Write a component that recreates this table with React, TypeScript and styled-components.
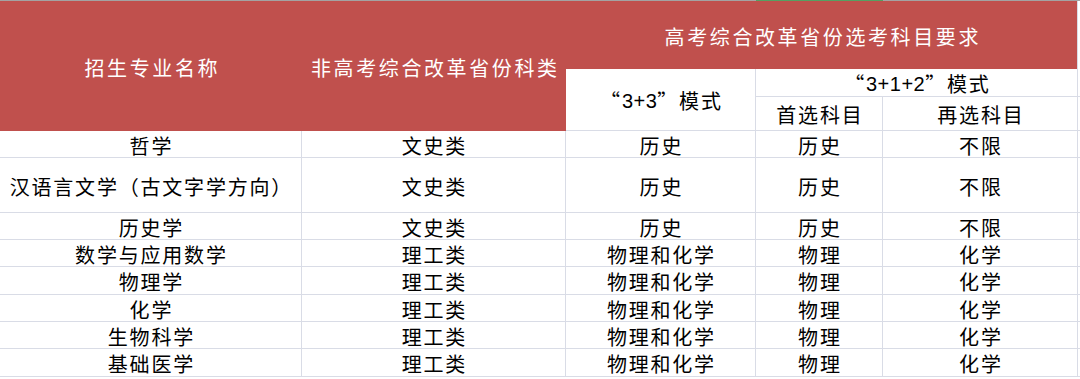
import React from "react";
import styled, { createGlobalStyle } from "styled-components";

const GlobalStyle = createGlobalStyle`
  html, body { margin: 0; padding: 0; background: #ffffff; }
  body { font-family: "Noto Sans CJK SC", "Noto Sans", sans-serif; }
`;

const LINE = "#d9dce6";
const RED = "#c0504d";

const Sheet = styled.div`
  display: grid;
  grid-template-columns: 302px 264px 190px 127px 195px 2px;
  grid-template-rows: 1px 68px 28px 34px 27px 55px 27px 27px 28px 27px 27px 28px 2px;
  width: 1080px;
  height: 379px;
  overflow: hidden;
  background: #ffffff;
`;

const Strip = styled.div<{ $col: string; $active?: boolean }>`
  grid-row: 1 / 2;
  grid-column: ${(p) => p.$col};
  background: ${(p) => (p.$active ? "#55a062" : "#a3a3a3")};
`;

const Cell = styled.div<{
  $row: string;
  $col: string;
  $red?: boolean;
  $edge?: boolean;
  $spacing?: number;
}>`
  grid-row: ${(p) => p.$row};
  grid-column: ${(p) => p.$col};
  box-sizing: border-box;
  display: flex;
  align-items: center;
  justify-content: center;
  white-space: nowrap;
  overflow: visible;
  font-family: "Noto Sans CJK SC", sans-serif;
  font-size: 20px;
  line-height: 1;
  letter-spacing: ${(p) => p.$spacing ?? 1.8}px;
  padding-left: ${(p) => p.$spacing ?? 1.8}px;
  padding-top: 3px;
  color: ${(p) => (p.$red ? "#ffffff" : "#000000")};
  background: ${(p) => (p.$red ? RED : "#ffffff")};
  border-right: ${(p) => (p.$red && !p.$edge ? "none" : `1px solid ${LINE}`)};
  border-bottom: ${(p) => (p.$red ? "none" : `1px solid ${LINE}`)};
`;

const Spacer = styled.div<{ $row: string; $lined?: boolean }>`
  grid-row: ${(p) => p.$row};
  grid-column: 6 / 7;
  box-sizing: border-box;
  background: #ffffff;
  border-bottom: ${(p) => (p.$lined ? `1px solid ${LINE}` : "none")};
`;

const Latin = styled.span`
  font-family: "Liberation Sans", Arial, sans-serif;
  letter-spacing: 0.5px;
`;

type Row = [string, string, string, string, string];

const rows: Row[] = [
  ["哲学", "文史类", "历史", "历史", "不限"],
  ["汉语言文学（古文字学方向）", "文史类", "历史", "历史", "不限"],
  ["历史学", "文史类", "历史", "历史", "不限"],
  ["数学与应用数学", "理工类", "物理和化学", "物理", "化学"],
  ["物理学", "理工类", "物理和化学", "物理", "化学"],
  ["化学", "理工类", "物理和化学", "物理", "化学"],
  ["生物科学", "理工类", "物理和化学", "物理", "化学"],
  ["基础医学", "理工类", "物理和化学", "物理", "化学"],
];

export default function App() {
  return (
    <>
      <GlobalStyle />
      <Sheet>
        <Strip $col="1 / 4" />
        <Strip $col="4 / 5" $active />
        <Strip $col="5 / 7" />

        <Cell $row="2 / 5" $col="1 / 2" $red $spacing={2.6}>
          招生专业名称
        </Cell>
        <Cell $row="2 / 5" $col="2 / 3" $red $spacing={2.6}>
          非高考综合改革省份科类
        </Cell>
        <Cell $row="2 / 3" $col="3 / 6" $red $edge $spacing={2.6}>
          高考综合改革省份选考科目要求
        </Cell>
        <Cell $row="3 / 5" $col="3 / 4">
          “<Latin>3+3</Latin>”模式
        </Cell>
        <Cell $row="3 / 4" $col="4 / 6">
          “<Latin>3+1+2</Latin>”模式
        </Cell>
        <Cell $row="4 / 5" $col="4 / 5">
          首选科目
        </Cell>
        <Cell $row="4 / 5" $col="5 / 6">
          再选科目
        </Cell>
        <Spacer $row="2 / 3" />
        <Spacer $row="3 / 4" $lined />
        <Spacer $row="4 / 5" $lined />

        {rows.map((r, i) => {
          const row = `${i + 5} / ${i + 6}`;
          return (
            <React.Fragment key={i}>
              {r.map((text, j) => (
                <Cell key={j} $row={row} $col={`${j + 1} / ${j + 2}`}>
                  {text}
                </Cell>
              ))}
              <Spacer $row={row} $lined />
            </React.Fragment>
          );
        })}
        <Spacer $row="13 / 14" />
      </Sheet>
    </>
  );
}
